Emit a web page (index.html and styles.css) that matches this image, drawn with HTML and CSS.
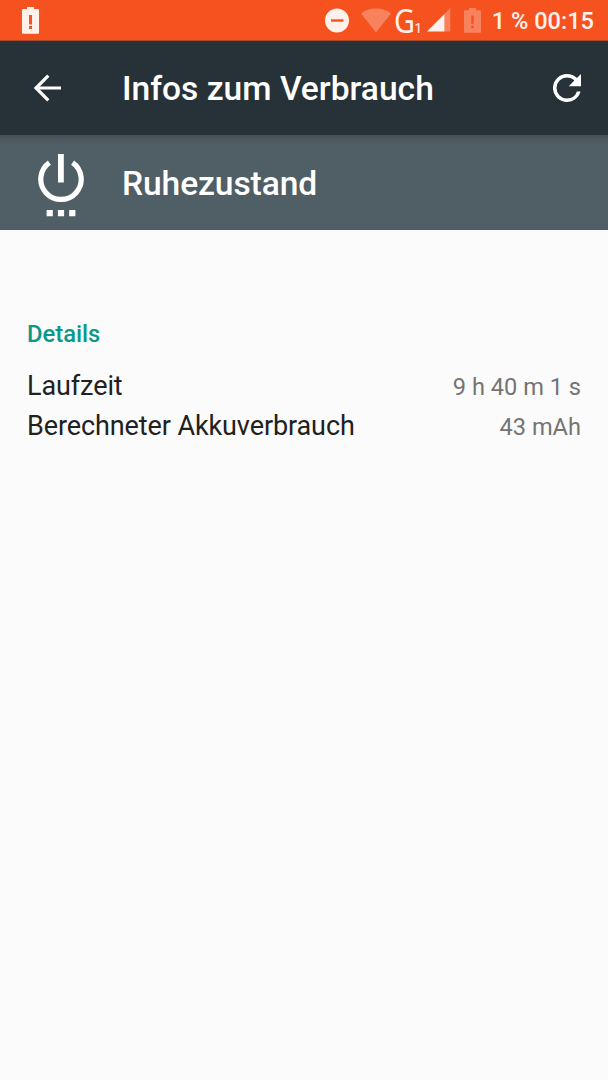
FILE: index.html
```html
<!DOCTYPE html>
<html lang="de">
<head>
<meta charset="utf-8">
<title>Infos zum Verbrauch</title>
<link rel="stylesheet" href="styles.css">
</head>
<body>
<header class="status-bar">
  <svg class="battery-alert" width="18" height="28" viewBox="0 0 18 28"><path fill-rule="evenodd" d="M5 0h7v2h4.200Q17 2 17 2.800V26q0 .8-.8.800H.8Q0 26.800 0 26V2.800Q0 2 .8 2H5zM7 8v9.500h3V8zM7 19v3h3v-3z"/></svg>
  <div class="status-icons">
    <svg class="dnd" width="24" height="25" viewBox="0 0 24 25"><circle cx="12" cy="12.500" r="12"/><path class="dnd-bar" d="M6 11.300h12.500v2.400H6z"/></svg>
    <svg class="wifi" width="30" height="25" viewBox="0 0 30 25"><path d="M0 5.500Q6.500.5 15 .5T30 5.500L15 24.500z"/></svg>
    <span class="network"><span class="network-type">G</span><span class="network-index">1</span></span>
    <svg class="signal" width="24" height="24" viewBox="0 0 24 24"><path class="faded" d="M17.500 6L23.300 0v23.500h-5.800z"/><path d="M0 23.500L17.500 6v17.500z"/></svg>
    <svg class="battery-small faded" width="18" height="26" viewBox="0 0 18 26"><path fill-rule="evenodd" d="M5 0h7v2.300h4.200q.8 0 .8.800v20.800q0 .8-.8.800H.8q-.8 0-.8-.8V3.100q0-.8.8-.8H5zM7.300 7.500v8.300h2.400V7.500zM7.300 17.700v2.500h2.400v-2.500z"/></svg>
  </div>
  <span class="status-text">1 % 00:15</span>
</header>
<nav class="toolbar">
  <svg class="back" width="28" height="28" viewBox="0 0 28 28"><path d="M27 14H2.500M14.300 1.600L2 14l12.300 12.400"/></svg>
  <h1 class="title">Infos zum Verbrauch</h1>
  <svg class="refresh" width="28" height="28" viewBox="4 4 16 16"><path d="M17.650 6.350A7.958 7.958 0 0 0 12 4a8 8 0 1 0 7.730 10h-2.080A5.990 5.990 0 0 1 12 18a6 6 0 1 1 0-12c1.660 0 3.140.690 4.220 1.780L13 11h7V4z"/></svg>
</nav>
<section class="entity">
  <svg class="power" width="46" height="63" viewBox="0 0 46 63"><path class="ring" d="M11.400 8.700A20.200 20.200 0 1 0 34.600 8.700"/><path d="M20 0h5.800v28.500H20zM8.600 56h6.200v6.200H8.600zM19.900 56h6.200v6.200h-6.200zM31.200 56h6.200v6.200h-6.200z"/></svg>
  <h2 class="title">Ruhezustand</h2>
</section>
<main class="details">
  <h3 class="section-title">Details</h3>
  <dl class="rows">
    <div class="row"><dt>Laufzeit</dt><dd>9 h 40 m 1 s</dd></div>
    <div class="row"><dt>Berechneter Akkuverbrauch</dt><dd>43 mAh</dd></div>
  </dl>
</main>
</body>
</html>
```

FILE: styles.css
```css
* { box-sizing: border-box; }
body, h1, h2, h3, dl, dd { margin: 0; }
body {
  min-height: 1080px;
  background: #fbfbfb;
  font-family: Roboto, sans-serif;
}
svg { display: block; flex: none; }
.status-bar {
  display: flex;
  align-items: flex-start;
  height: 41px;
  padding: 7px 14px 0 22px;
  background: #f6521f;
  border-bottom: 1px solid #a8472a;
  color: #fff0eb;
  fill: #fff0eb;
}
.status-icons { display: flex; margin-left: auto; }
.dnd { margin-top: 1px; }
.dnd-bar { fill: #f6521f; }
.wifi { margin: 1px 0 0 12px; opacity: .3; }
.network {
  display: flex;
  align-items: baseline;
  width: 32px;
  margin: -4px 0 0 3px;
  font: 32px/36px "Noto Sans", sans-serif;
}
.network-type { transform: scaleX(.9); transform-origin: left; }
.network-index { margin-left: -3px; font-size: 15px; }
.signal { margin: 1px 0 0 1px; }
.battery-small { margin: 1px 0 0 13px; }
.faded { opacity: .3; }
.status-text {
  margin-left: 10px;
  font-size: 23.6px;
  font-weight: 500;
  line-height: 28px;
  white-space: nowrap;
}
.toolbar {
  display: flex;
  align-items: center;
  height: 94px;
  padding: 0 27px 0 34px;
  background: #263238;
}
.title {
  color: #fff;
  font-size: 33.6px;
  font-weight: 500;
  line-height: 40px;
  white-space: nowrap;
}
.back { fill: none; stroke: #fff; stroke-width: 3.2; }
.toolbar .title { margin: 2px 0 0 60px; }
.refresh { margin-left: auto; fill: #fff; }
.entity {
  display: flex;
  align-items: flex-start;
  height: 94.5px;
  padding: 19px 0 0 38px;
  background: linear-gradient(#434f54, #4b595f 4px, #505e65 10px, #505e65);
}
.power { fill: #fff; }
.ring { fill: none; stroke: #fff; stroke-width: 5.2; }
.entity .title { margin: 10px 0 0 38px; letter-spacing: -.1px; }
.details { padding: 90.5px 27px 0 27px; }
.section-title {
  color: #0c9888;
  font-size: 23.75px;
  font-weight: 500;
  line-height: 28px;
}
.rows { margin-top: 18px; }
.row {
  display: flex;
  justify-content: space-between;
  align-items: baseline;
  height: 40px;
  line-height: 40px;
}
.row dt { color: #212121; font-size: 27px; letter-spacing: -.1px; }
.row dd { color: #747474; font-size: 23.6px; }
```
